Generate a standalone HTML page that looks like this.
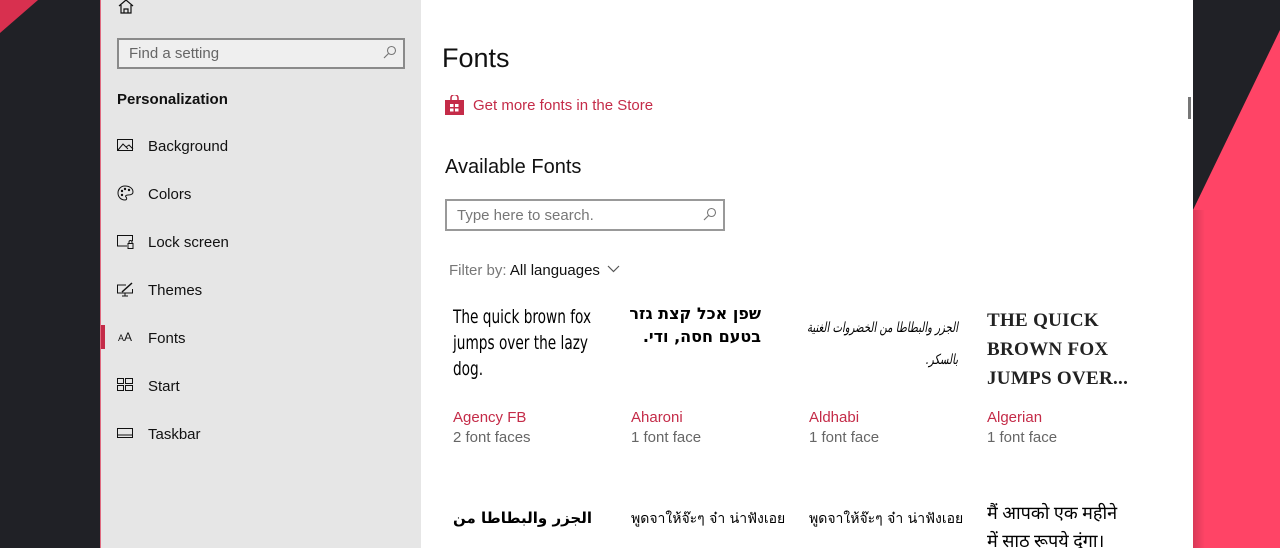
<!DOCTYPE html>
<html><head><meta charset="utf-8"><style>
*{margin:0;padding:0;box-sizing:border-box}
html,body{width:1280px;height:548px;overflow:hidden}
body{position:relative;background:#202126;font-family:"Liberation Sans","Noto Sans CJK SC",sans-serif;}
.abs{position:absolute}
.side{left:100px;top:0;width:321px;height:548px;background:#e6e6e6;border-left:1px solid #e06a80}
.main{left:421px;top:0;width:772px;height:548px;background:#fff;overflow:hidden}
.t{position:absolute;white-space:nowrap;color:#000}
.nav{font-size:15px;color:#111}
.ic{position:absolute;left:16px}
.red{color:#c42b48}
.gray{color:#666}
</style></head><body>
<svg class="abs" style="left:0;top:0" width="100" height="548"><polygon points="0,0 38,0 0,33" fill="#d8304f"/></svg>
<svg class="abs" style="left:1193px;top:0" width="87" height="548"><defs><linearGradient id="g" x1="0" x2="1"><stop offset="0" stop-color="#d83a58"/><stop offset="1" stop-color="#ff4466"/></linearGradient></defs><polygon points="87,30 87,548 0,548 0,210" fill="#ff4466"/><rect x="0" y="210" width="12" height="338" fill="url(#g)"/></svg>
<div class="abs side">
  <svg class="abs" style="left:17px;top:0" width="16" height="14"><path d="M1 6 L8 0 L15 6 M3 5 V13 H13 V5 M6 13 V9 H10 V13" fill="none" stroke="#111" stroke-width="1.2"/></svg>
  <div class="abs" style="left:16px;top:38px;width:288px;height:31px;border:2px solid #8a8a8a;background:#efefef"></div>
  <div class="t" style="left:28px;top:45px;font-size:15px;color:#666">Find a setting</div>
  <svg class="abs" style="left:282px;top:45px" width="14" height="14"><circle cx="8.5" cy="5.5" r="4" fill="none" stroke="#777" stroke-width="1.1"/><path d="M5.5 8.5 L1 13" stroke="#777" stroke-width="1.2"/></svg>
  <div class="t" style="left:16px;top:91px;font-size:15px;font-weight:bold;color:#111">Personalization</div>
  <svg class="ic" style="top:139px" width="17" height="13"><rect x="0.5" y="0.5" width="15" height="11" fill="none" stroke="#111"/><path d="M1 11 L6 5 L11 10 M9 8 L12 6 L16 10" fill="none" stroke="#111"/></svg>
  <div class="t nav" style="left:47px;top:138px">Background</div>
  <svg class="ic" style="top:185px" width="17" height="16"><path d="M8 1 C3 1 1 5 1 8 C1 12 4 15 8 15 C10 15 10 13 9 12 C8 11 9 10 11 10 C14 10 16 9 16 7 C16 3 12 1 8 1Z" fill="none" stroke="#111"/><circle cx="5" cy="6" r="1.2" fill="#111"/><circle cx="8" cy="4" r="1.2" fill="#111"/><circle cx="12" cy="5" r="1.2" fill="#111"/><circle cx="5" cy="10" r="1.2" fill="#111"/></svg>
  <div class="t nav" style="left:47px;top:186px">Colors</div>
  <svg class="ic" style="top:235px" width="17" height="14"><path d="M10 11 H0.5 V0.5 H15.5 V6" fill="none" stroke="#111"/><rect x="11" y="8.5" width="5" height="5" fill="none" stroke="#111"/><path d="M12 8.5 V7 a1.5 1.5 0 0 1 3 0 V8.5" fill="none" stroke="#111"/></svg>
  <div class="t nav" style="left:47px;top:234px">Lock screen</div>
  <svg class="ic" style="top:282px" width="17" height="15"><path d="M9 3 H0.5 V11 H15.5 V7 M8 11 V14 M5 14 H11" fill="none" stroke="#111"/><path d="M5 10 L15 1" stroke="#111" stroke-width="1.5"/></svg>
  <div class="t nav" style="left:47px;top:282px">Themes</div>
  <div class="abs" style="left:0;top:325px;width:4px;height:24px;background:#c42b48"></div>
  <div class="t" style="left:17px;top:330px;font-size:9px;color:#111">A<span style="font-size:12px">A</span></div>
  <div class="t nav" style="left:47px;top:330px">Fonts</div>
  <svg class="ic" style="top:378px" width="17" height="14"><rect x="0.5" y="0.5" width="6" height="5" fill="none" stroke="#111"/><rect x="8.5" y="0.5" width="7" height="5" fill="none" stroke="#111"/><rect x="0.5" y="7.5" width="6" height="5" fill="none" stroke="#111"/><rect x="8.5" y="7.5" width="7" height="5" fill="none" stroke="#111"/></svg>
  <div class="t nav" style="left:47px;top:378px">Start</div>
  <svg class="ic" style="top:428px" width="17" height="11"><rect x="0.5" y="0.5" width="15" height="9" fill="none" stroke="#111"/><path d="M1 7 H15" stroke="#111"/></svg>
  <div class="t nav" style="left:47px;top:426px">Taskbar</div>
</div>
<div class="abs main">
  <div class="t" style="left:21px;top:43px;font-size:27px;color:#111">Fonts</div>
  <svg class="abs" style="left:24px;top:95px" width="19" height="20"><path d="M6 5 V3 a3 3 0 0 1 7 0 V5" fill="none" stroke="#c42b48" stroke-width="1.5"/><rect x="0" y="5" width="19" height="15" fill="#c42b48"/><rect x="5" y="9" width="3.5" height="3" fill="#fff"/><rect x="10" y="9" width="3.5" height="3" fill="#fff"/><rect x="5" y="13.5" width="3.5" height="3" fill="#fff"/><rect x="10" y="13.5" width="3.5" height="3" fill="#fff"/></svg>
  <div class="t red" style="left:52px;top:97px;font-size:15px">Get more fonts in the Store</div>
  <div class="t" style="left:24px;top:156px;font-size:20px;color:#111">Available Fonts</div>
  <div class="abs" style="left:24px;top:199px;width:280px;height:32px;border:2px solid #999;background:#fff"></div>
  <div class="t" style="left:36px;top:207px;font-size:15px;color:#777">Type here to search.</div>
  <svg class="abs" style="left:282px;top:207px" width="14" height="14"><circle cx="8.5" cy="5.5" r="4" fill="none" stroke="#777" stroke-width="1.1"/><path d="M5.5 8.5 L1 13" stroke="#777" stroke-width="1.2"/></svg>
  <div class="t" style="left:28px;top:262px;font-size:15px;color:#777">Filter by: <span style="color:#111">All languages</span></div>
  <svg class="abs" style="left:186px;top:265px" width="13" height="8"><path d="M1 1 L6.5 6.5 L12 1" fill="none" stroke="#555" stroke-width="1.2"/></svg>
  <div class="abs" style="left:767px;top:97px;width:3px;height:22px;background:#777"></div>

  <div class="t" style="left:32px;top:304px;font-size:19px;line-height:26px;font-family:'DejaVu Sans Condensed','Liberation Sans Narrow',sans-serif;transform:scaleX(.8);transform-origin:left">The quick brown fox<br>jumps over the lazy<br>dog.</div>
  <div class="t" style="left:206px;top:302px;width:134px;font-size:16px;line-height:23px;font-weight:bold;font-family:'DejaVu Sans',sans-serif">
    <div style="direction:rtl;text-align:right">שפן אכל קצת גזר</div><div style="direction:rtl;text-align:right">בטעם חסה, ודי.</div></div>
  <div class="t" style="left:337px;top:312px;width:200px;font-size:14px;line-height:32px;font-style:italic;font-family:'DejaVu Sans',sans-serif;transform:scaleX(.72);transform-origin:right">
    <div style="direction:rtl;text-align:right">الجزر والبطاطا من الخضروات الغنية</div><div style="direction:rtl;text-align:right">بالسكر.</div></div>
  <div class="t" style="left:566px;top:306px;font-size:19px;line-height:29px;font-weight:bold;font-family:'Liberation Serif',serif;letter-spacing:.3px;color:#222">THE QUICK<br>BROWN FOX<br>JUMPS OVER...</div>

  <div class="t red" style="left:32px;top:409px;font-size:15px">Agency FB</div>
  <div class="t gray" style="left:32px;top:429px;font-size:15px">2 font faces</div>
  <div class="t red" style="left:210px;top:409px;font-size:15px">Aharoni</div>
  <div class="t gray" style="left:210px;top:429px;font-size:15px">1 font face</div>
  <div class="t red" style="left:388px;top:409px;font-size:15px">Aldhabi</div>
  <div class="t gray" style="left:388px;top:429px;font-size:15px">1 font face</div>
  <div class="t red" style="left:566px;top:409px;font-size:15px">Algerian</div>
  <div class="t gray" style="left:566px;top:429px;font-size:15px">1 font face</div>

  <div class="t" style="left:32px;top:509px;font-size:15px;font-weight:bold;font-family:'DejaVu Sans',sans-serif;direction:rtl">الجزر والبطاطا من</div>
  <div class="t" style="left:210px;top:508px;font-size:14px;font-family:'DejaVu Sans',sans-serif">พูดจาให้จ๊ะๆ จ๋า น่าฟังเอย</div>
  <div class="t" style="left:388px;top:508px;font-size:14px;font-family:'DejaVu Sans',sans-serif">พูดจาให้จ๊ะๆ จ๋า น่าฟังเอย</div>
  <div class="t" style="left:566px;top:499px;font-size:18px;line-height:28px;font-family:'Liberation Serif','DejaVu Sans',serif">मैं आपको एक महीने<br>में साठ रूपये दूंगा।</div>
</div>
</body></html>
